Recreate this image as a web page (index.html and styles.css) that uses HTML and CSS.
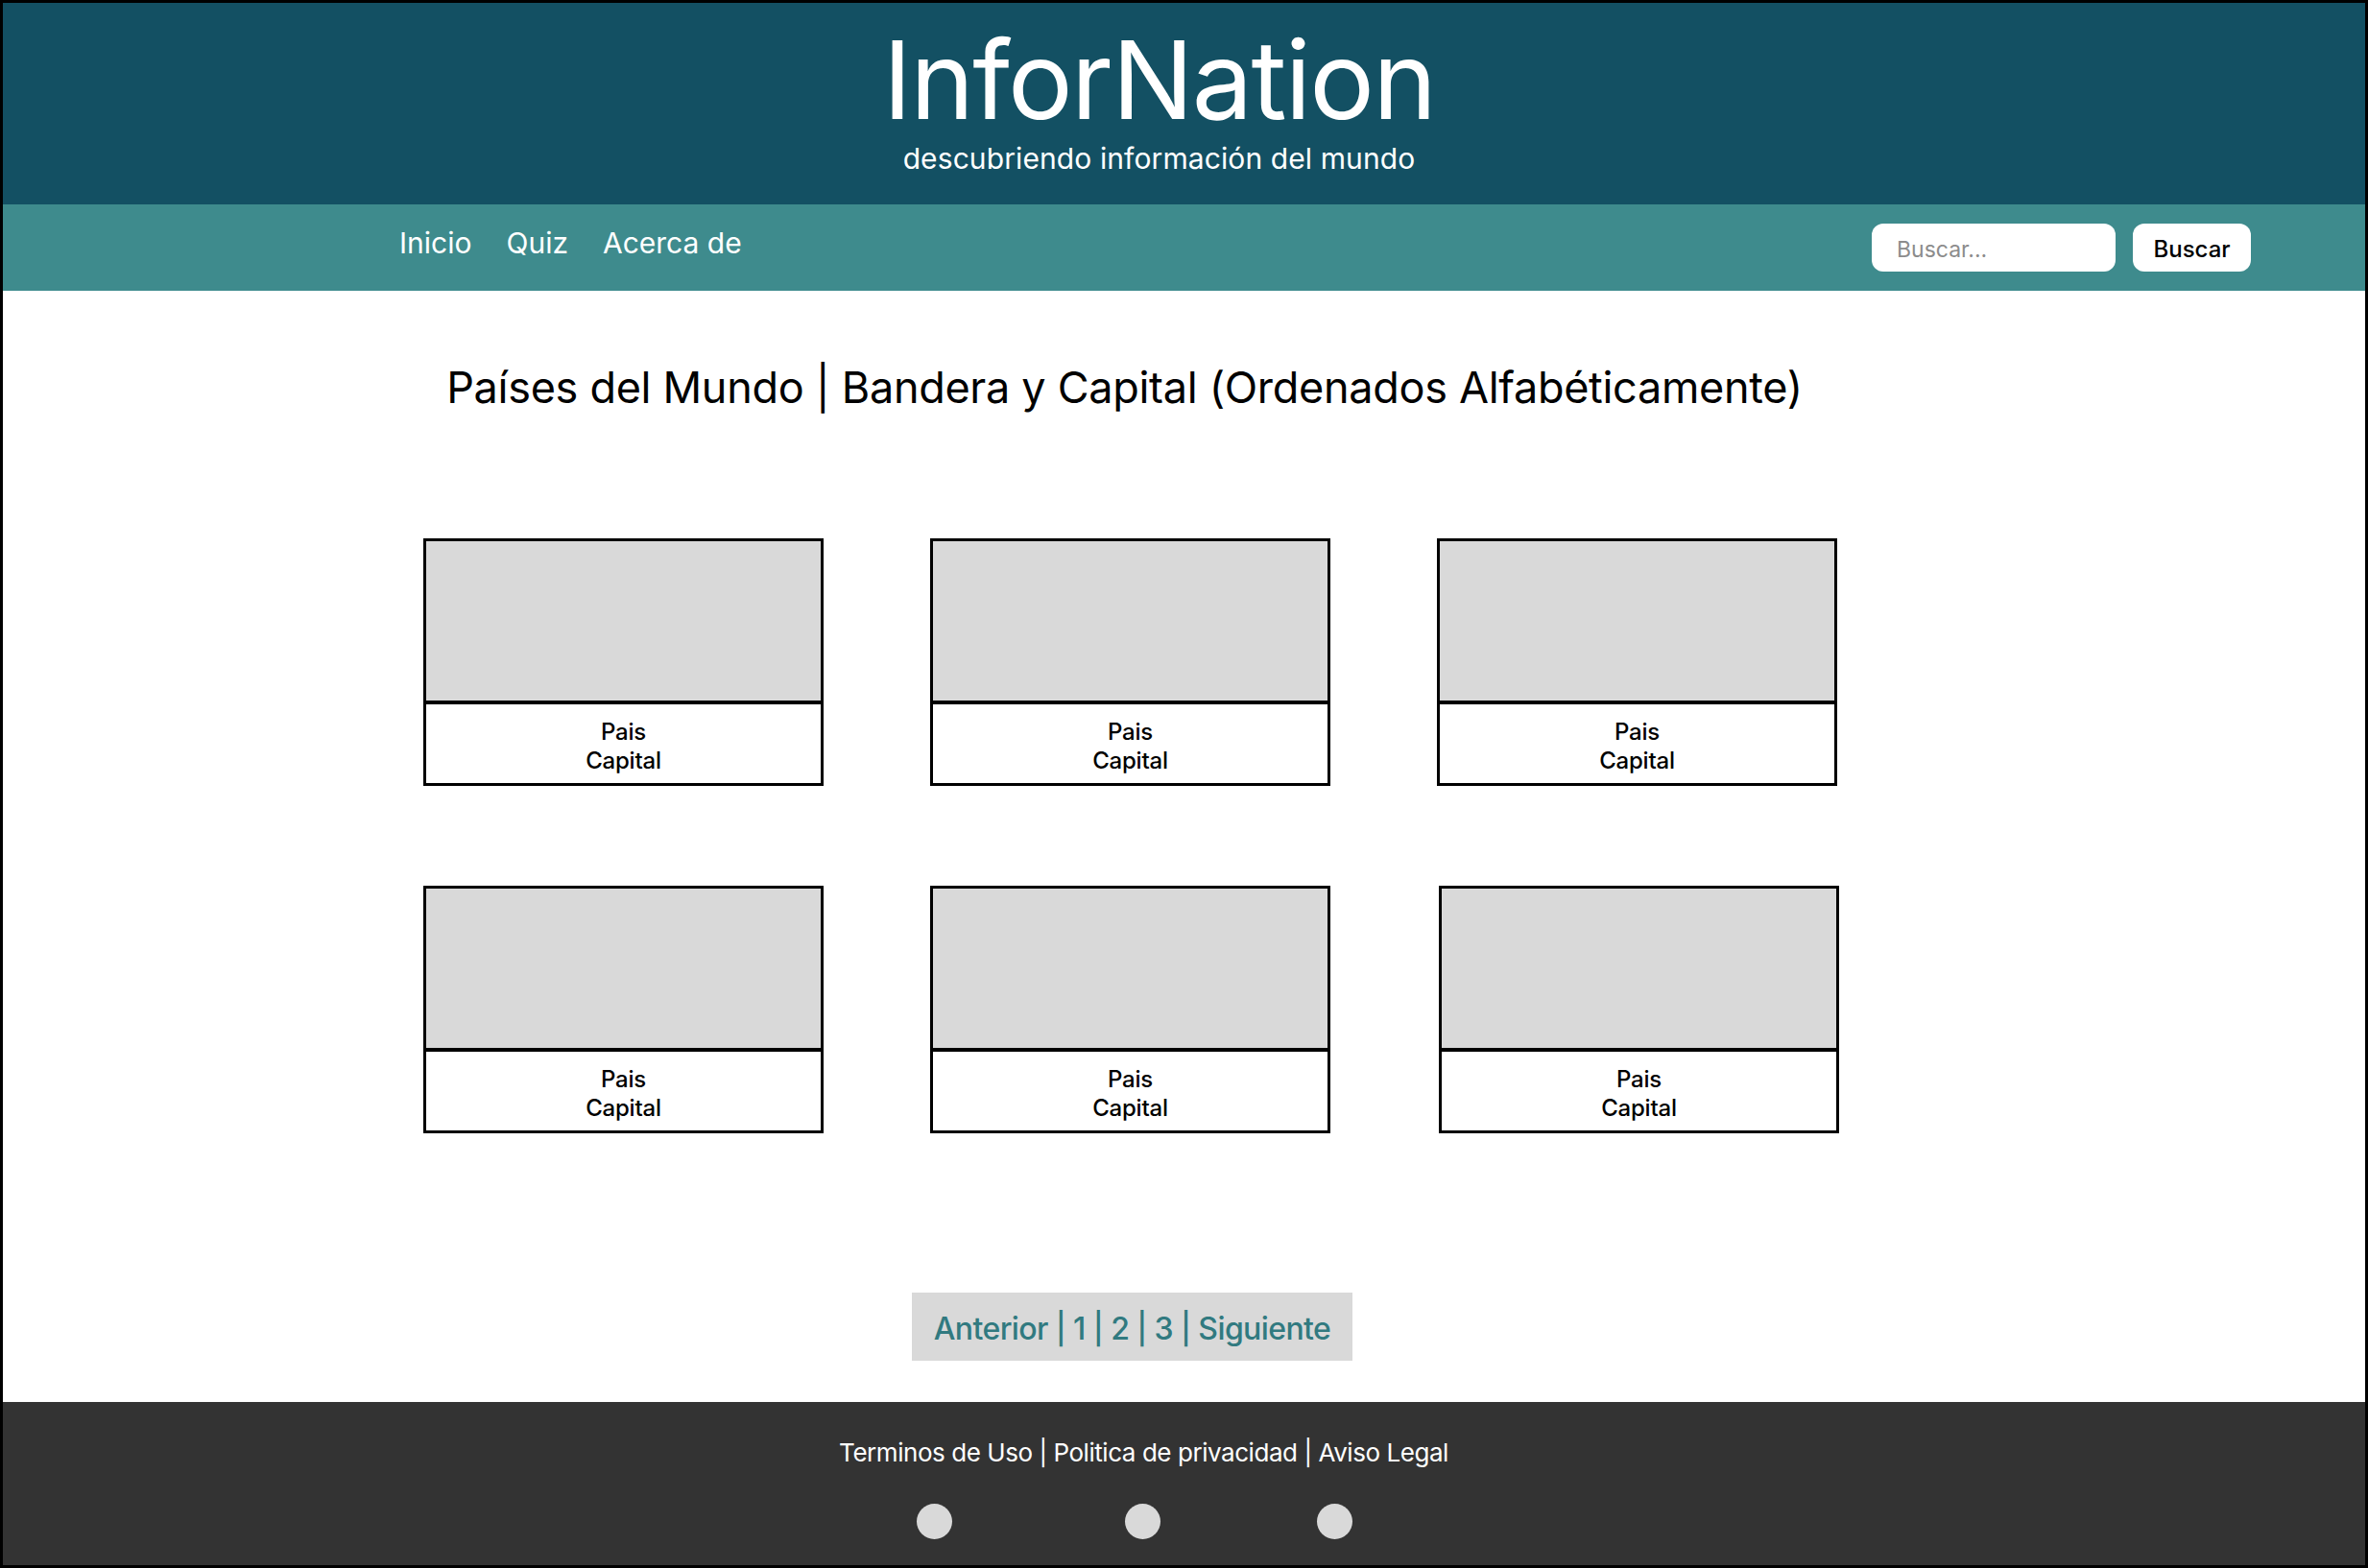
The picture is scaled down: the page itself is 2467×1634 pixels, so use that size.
FILE: index.html
```html
<!DOCTYPE html>
<html lang="es">
<head>
<meta charset="utf-8">
<title>InforNation</title>
<link rel="stylesheet" href="styles.css">
</head>
<body>
<div class="page">
  <header class="site-header">
    <h1 class="brand">InforNation</h1>
    <p class="tagline">descubriendo información del mundo</p>
  </header>
  <nav class="navbar">
    <ul class="nav-links">
      <li><a href="#">Inicio</a></li>
      <li><a href="#">Quiz</a></li>
      <li><a href="#">Acerca de</a></li>
    </ul>
    <form class="search">
      <input class="search-input" type="text" placeholder="Buscar...">
      <button class="search-btn" type="button">Buscar</button>
    </form>
  </nav>
  <main class="content">
    <h2 class="page-title">Países del Mundo | Bandera y Capital (Ordenados Alfabéticamente)</h2>
    <section class="grid">
      <div class="card"><div class="flag"></div><div class="caption"><div>Pais</div><div>Capital</div></div></div>
      <div class="card"><div class="flag"></div><div class="caption"><div>Pais</div><div>Capital</div></div></div>
      <div class="card"><div class="flag"></div><div class="caption"><div>Pais</div><div>Capital</div></div></div>
      <div class="card"><div class="flag"></div><div class="caption"><div>Pais</div><div>Capital</div></div></div>
      <div class="card"><div class="flag"></div><div class="caption"><div>Pais</div><div>Capital</div></div></div>
      <div class="card card-shift"><div class="flag"></div><div class="caption"><div>Pais</div><div>Capital</div></div></div>
    </section>
    <div class="pager-wrap">
      <div class="pager">Anterior | 1 | 2 | 3 | Siguiente</div>
    </div>
  </main>
  <footer class="site-footer">
    <p class="footer-links">Terminos de Uso | Politica de privacidad | Aviso Legal</p>
    <div class="socials">
      <span class="dot"></span>
      <span class="dot dot-mid"></span>
      <span class="dot"></span>
    </div>
  </footer>
</div>
</body>
</html>
```

FILE: styles.css
```css
* { box-sizing: border-box; }
html, body { margin: 0; padding: 0; }
body {
  font-family: Inter, "Noto Sans", "Liberation Sans", sans-serif;
  background: #ffffff;
}
.page {
  width: 2467px;
  height: 1634px;
  border: 3px solid #000;
  display: flex;
  flex-direction: column;
  overflow: hidden;
}
.site-header {
  background: #135063;
  height: 210px;
  padding: 25px 52px 0 0;
  text-align: center;
  color: #fff;
}
.brand {
  margin: 0;
  font-size: 113px;
  font-weight: 400;
  line-height: 110px;
  letter-spacing: -1.8px;
}
.tagline {
  margin: 12px 0 0;
  font-size: 30px;
  line-height: 30px;
  font-weight: 400;
  letter-spacing: 0.1px;
}
.navbar {
  background: #3e8b8d;
  height: 90px;
  display: flex;
  align-items: flex-start;
  justify-content: space-between;
  padding: 20px 119px 0 413px;
}
.nav-links {
  list-style: none;
  margin: 5px 0 0;
  padding: 0;
  display: flex;
  gap: 36px;
}
.nav-links a {
  color: #fff;
  text-decoration: none;
  font-size: 30px;
  line-height: 30px;
}
.search {
  display: flex;
  gap: 18px;
  margin: 0;
}
.search-input {
  width: 254px;
  height: 50px;
  border: none;
  border-radius: 12px;
  background: #fff;
  padding: 3px 0 0 26px;
  font-family: Inter, "Noto Sans", sans-serif;
  font-size: 23px;
  outline: none;
}
.search-input::placeholder { color: #8c8c8c; }
.search-btn {
  width: 123px;
  height: 50px;
  border: none;
  border-radius: 12px;
  background: #fff;
  color: #000;
  font-family: Inter, "Noto Sans", sans-serif;
  font-size: 24px;
  font-weight: 500;
  padding: 3px 0 0;
}
.content {
  flex: 1;
  width: 1473px;
  margin-left: 438px;
}
.page-title {
  margin: 78px 12px 0 0;
  font-size: 45px;
  line-height: 45px;
  font-weight: 400;
  letter-spacing: -0.3px;
  text-align: center;
  color: #000;
}
.grid {
  margin-top: 135px;
  display: grid;
  grid-template-columns: repeat(3, 417px);
  column-gap: 111px;
  row-gap: 104px;
}
.card {
  border: 3px solid #000;
  height: 258px;
  display: flex;
  flex-direction: column;
}
.card-shift { margin-left: 2px; margin-right: -2px; }
.flag {
  height: 170px;
  background: #d9d9d9;
  border-bottom: 4px solid #000;
}
.caption {
  flex: 1;
  padding-top: 14px;
  text-align: center;
  font-size: 24px;
  line-height: 30px;
  font-weight: 500;
  letter-spacing: -0.2px;
  color: #000;
}
.pager-wrap {
  margin-top: 166px;
  display: flex;
  justify-content: center;
  padding-left: 4px;
}
.pager {
  width: 459px;
  height: 71px;
  background: #d9d9d9;
  color: #317a80;
  font-size: 32px;
  line-height: 69px;
  padding-top: 3px;
  text-align: center;
  font-weight: 500;
  letter-spacing: -0.6px;
}
.site-footer {
  background: #333333;
  height: 170px;
  padding-top: 40px;
  flex-shrink: 0;
}
.footer-links {
  margin: 0;
  padding-right: 84px;
  text-align: center;
  color: #fff;
  font-size: 26px;
  line-height: 26px;
  letter-spacing: -0.45px;
}
.socials {
  width: 454px;
  margin: 40px 0 0 952px;
  display: flex;
  justify-content: space-between;
}
.dot {
  width: 37px;
  height: 37px;
  border-radius: 50%;
  background: #d9d9d9;
}
.dot-mid { position: relative; left: 8px; }
```
